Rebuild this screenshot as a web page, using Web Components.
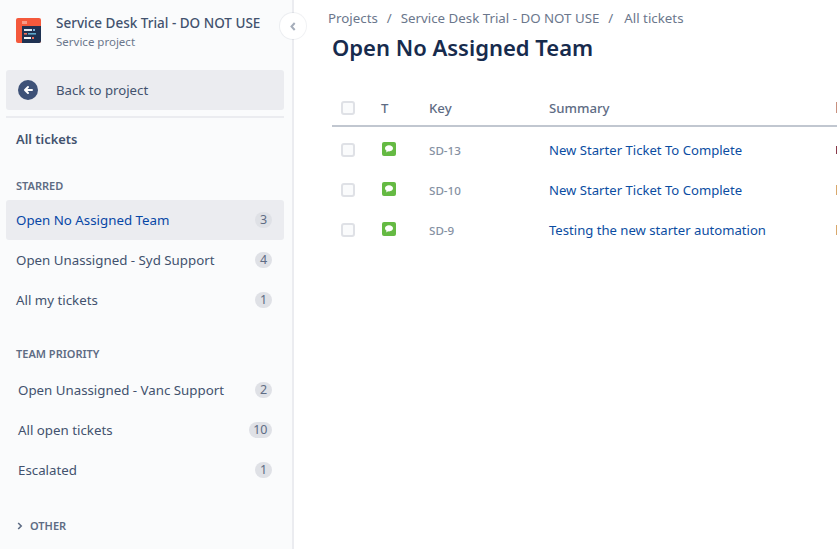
<!DOCTYPE html>
<html><head><meta charset="utf-8">
<style>
html,body{margin:0;height:100%;background:#fff;overflow:hidden}
body{font-family:"Noto Sans","Open Sans",sans-serif;width:837px;height:549px}
</style></head><body>
<app-shell>
  <side-bar slot="side"></side-bar>
  <main-view slot="main"></main-view>
</app-shell>
<script>
const F='"Noto Sans","Open Sans",sans-serif';
class AppShell extends HTMLElement{constructor(){super();this.attachShadow({mode:'open'}).innerHTML=`<style>
:host{display:flex;width:837px;height:549px;overflow:hidden;font-family:${F}}
::slotted(side-bar){flex:0 0 294px}
::slotted(main-view){flex:1;min-width:0}
</style><slot name="side"></slot><slot name="main"></slot>`}}
customElements.define('app-shell',AppShell);

class NavItem extends HTMLElement{constructor(){super();this.attachShadow({mode:'open'});}
connectedCallback(){const c=this.getAttribute('count');this.shadowRoot.innerHTML=`<style>
:host{display:flex;align-items:center;justify-content:space-between;height:40px;border-radius:3px;padding:0 12px 0 var(--pl,10px);font-size:13.3px;color:#42526e}
:host([active]){background:#ebecf0;color:#0747a6}
.b{min-width:8px;padding:0 4.5px;height:16px;line-height:16px;border-radius:8px;background:#dfe1e6;color:#5e6c84;font-size:12.5px;text-align:center}
</style><slot></slot><span class="b">${c}</span>`}}
customElements.define('nav-item',NavItem);

class SideBar extends HTMLElement{constructor(){super();this.attachShadow({mode:'open'}).innerHTML=`<style>
:host{display:block;box-sizing:border-box;height:549px;background:#fafbfc;border-right:2px solid #ebecf0;padding:0 8px 0 6px;position:relative}
.proj{display:flex;align-items:center;box-sizing:border-box;height:70px;padding:0 0 9px 10px;gap:15px}
.pt{font-size:13.5px;font-weight:500;color:#42526e;line-height:18px;white-space:nowrap;padding-top:2px}
.ps{font-size:11.5px;color:#6b778c;line-height:16px;margin-top:2px}
.back{display:flex;align-items:center;height:40px;background:#ebecf0;border-radius:3px;padding-left:12px;gap:18px;font-size:13.2px;color:#42526e}
hr{border:0;height:2px;background:#ebecf0;margin:6px 0 0}
.all{font-size:12.9px;font-weight:600;color:#42526e;padding-left:10px;line-height:18px;margin-top:12px}
.h{font-size:11px;font-weight:600;color:#5e6c84;padding-left:10px;line-height:14px}
.s1{margin-top:31px;margin-bottom:7px}.s2{margin-top:27px;margin-bottom:9px}
.team{--pl:12px}
.oth{display:flex;align-items:center;gap:7px;margin-top:29px;padding-left:11px;font-size:11px;font-weight:600;color:#5e6c84;line-height:14px}
.col{position:absolute;right:-14px;top:13px;width:26px;height:26px;border-radius:50%;background:#fff;box-shadow:0 0 0 1px rgba(9,30,66,.06);display:flex;align-items:center;justify-content:center}
</style>
<div class="proj">
<svg width="25" height="25" viewBox="0 0 25 25"><rect width="25" height="25" rx="2" fill="#f4593c"/><path d="M6 8h19v15a2 2 0 0 1-2 2H6z" fill="#1f3252"/><rect x="6" y="3" width="5" height="3" fill="#f79a86"/><rect x="8" y="11" width="8" height="2" fill="#dfe6f0"/><rect x="17" y="11" width="2" height="2" fill="#7fb6e0"/><rect x="8" y="15" width="3" height="1.600" fill="#f0705a"/><rect x="12" y="15" width="8" height="1.600" fill="#5fa8c8"/><rect x="8" y="19" width="7" height="2" fill="#f2f4f7"/><rect x="16" y="19" width="2" height="2" fill="#f0705a"/></svg>
<div><div class="pt">Service Desk Trial - DO NOT USE</div><div class="ps">Service project</div></div>
</div>
<div class="back"><svg width="20" height="20" viewBox="0 0 20 20"><circle cx="10" cy="10" r="10" fill="#3e5278"/><path d="M14 10H7.500M10 7l-3 3 3 3" fill="none" stroke="#fff" stroke-width="2" stroke-linecap="round" stroke-linejoin="round"/></svg><span>Back to project</span></div>
<hr>
<div class="all">All tickets</div>
<div class="h s1">STARRED</div>
<nav-item active count="3">Open No Assigned Team</nav-item>
<nav-item count="4">Open Unassigned - Syd Support</nav-item>
<nav-item count="1">All my tickets</nav-item>
<div class="h s2">TEAM PRIORITY</div>
<div class="team">
<nav-item count="2">Open Unassigned - Vanc Support</nav-item>
<nav-item count="10">All open tickets</nav-item>
<nav-item count="1">Escalated</nav-item>
</div>
<div class="oth"><svg width="6" height="8" viewBox="0 0 6 8"><path d="M1.200 1l3 3-3 3" fill="none" stroke="#5e6c84" stroke-width="1.600"/></svg>OTHER</div>
<div class="col"><svg width="6" height="9" viewBox="0 0 6 9"><path d="M4.700 1 1.500 4.500l3.200 3.500" fill="none" stroke="#a5adba" stroke-width="2"/></svg></div>
`}}
customElements.define('side-bar',SideBar);

class TicketRow extends HTMLElement{constructor(){super();this.attachShadow({mode:'open'});}
connectedCallback(){const g=this.getAttribute('edge'),h=this.getAttribute('eh')||10;this.shadowRoot.innerHTML=`<style>
:host{display:grid;grid-template-columns:49px 48px 120px 285px 1fr;align-items:center;height:40px;font-size:13.12px}
.cb{box-sizing:border-box;width:14px;height:14px;margin-left:9px;border:2px solid #dfe1e6;border-radius:3px;background:#fafbfc}
svg{display:block;margin:-2px 0 0 1px}
.k{font-size:11.6px;color:#8590a2;font-weight:500}
.s{color:#0b4da2;white-space:nowrap}
.e{justify-self:end;width:1.500px;height:${h}px;background:${g}}
</style><div class="cb"></div><svg width="14" height="14" viewBox="0 0 14 14"><rect width="14" height="14" rx="2" fill="#65ba43"/><path d="M7 3.200c2.300 0 4 1.300 4 3.100S9.300 9.400 7 9.400l-.9-.1-2 1.300.5-1.800C3.700 8.200 3 7.300 3 6.300c0-1.800 1.700-3.100 4-3.100z" fill="#fff"/></svg><span class="k"><slot name="k"></slot></span><span class="s"><slot></slot></span><span class="e"></span>`}}
customElements.define('ticket-row',TicketRow);

class MainView extends HTMLElement{constructor(){super();this.attachShadow({mode:'open'}).innerHTML=`<style>
:host{display:block;height:549px;overflow:hidden;padding-left:38px}
.bc{display:flex;gap:9px;margin-left:-4px;padding-top:9px;font-size:13.3px;line-height:18px;color:#6b778c;white-space:nowrap}
.bc span:last-child{margin-left:2px}
h1{margin:4px 0 0;font-size:22px;line-height:32px;font-weight:600;color:#172b4d;white-space:nowrap}
.head{display:grid;grid-template-columns:49px 48px 120px 285px 1fr;align-items:center;height:35px;margin-top:27px;border-bottom:2px solid #c1c7d0;font-size:13.2px;font-weight:500;color:#5e6c84}
.cb{box-sizing:border-box;width:14px;height:14px;margin-left:9px;border:2px solid #dfe1e6;border-radius:3px;background:#fafbfc}
.e{justify-self:end;width:1.500px;height:11px;background:#c8907f}
.rows{padding-top:3px}
</style>
<div class="bc"><span>Projects</span><span>/</span><span>Service Desk Trial - DO NOT USE</span><span>/</span><span>All tickets</span></div>
<h1>Open No Assigned Team</h1>
<div class="head"><div class="cb"></div><span>T</span><span>Key</span><span>Summary</span><span class="e"></span></div>
<div class="rows">
<ticket-row edge="#8a3a4a" eh="8"><span slot="k">SD-13</span>New Starter Ticket To Complete</ticket-row>
<ticket-row edge="#d9a86c"><span slot="k">SD-10</span>New Starter Ticket To Complete</ticket-row>
<ticket-row edge="#d9a86c"><span slot="k">SD-9</span>Testing the new starter automation</ticket-row>
</div>`}}
customElements.define('main-view',MainView);
</script>
</body></html>
